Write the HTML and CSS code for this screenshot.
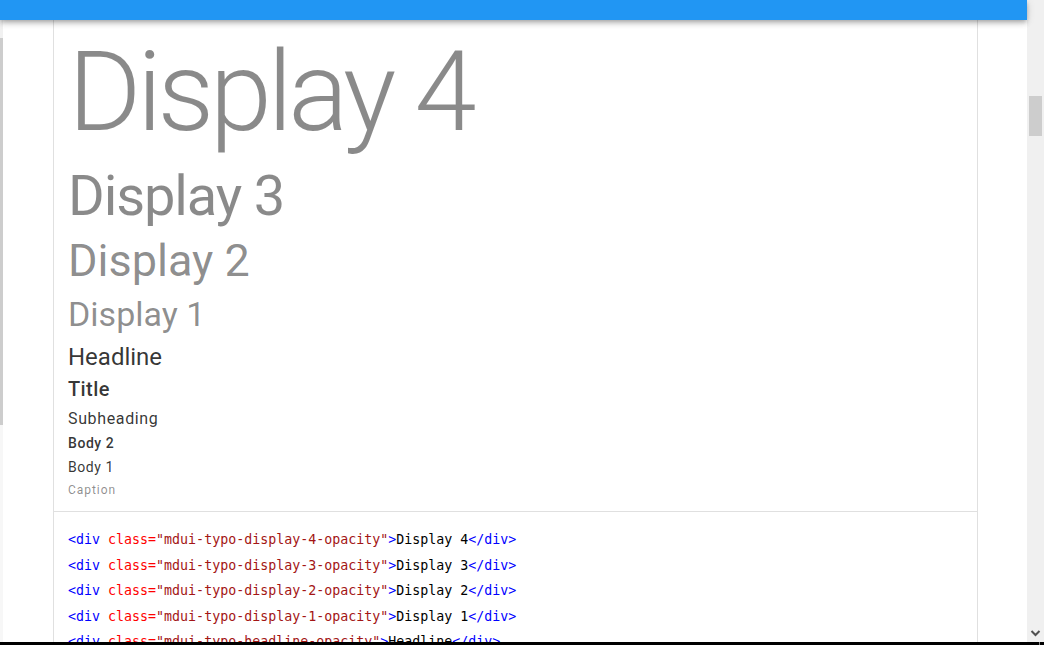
FILE: index.html
```html
<!DOCTYPE html>
<html>
<head>
<meta charset="utf-8">
<title>Typography</title>
<link rel="stylesheet" href="styles.css">
</head>
<body>
<div class="screen">
  <div class="window">
    <div class="leftbar"><div class="leftbar-top"></div><div class="leftbar-thumb"></div></div>
    <div class="page">
      <div class="card">
        <div class="demo">
          <div class="t-d4">Display 4</div>
          <div class="t-d3">Display 3</div>
          <div class="t-d2">Display 2</div>
          <div class="t-d1">Display 1</div>
          <div class="t-headline">Headline</div>
          <div class="t-title">Title</div>
          <div class="t-subheading">Subheading</div>
          <div class="t-body2">Body 2</div>
          <div class="t-body1">Body 1</div>
          <div class="t-caption">Caption</div>
        </div>
        <div class="code">
          <div class="line"><span class="tag">&lt;div</span> <span class="attr">class=</span><span class="val">"mdui-typo-display-4-opacity"</span><span class="tag">&gt;</span>Display 4<span class="tag">&lt;/div&gt;</span></div>
          <div class="line"><span class="tag">&lt;div</span> <span class="attr">class=</span><span class="val">"mdui-typo-display-3-opacity"</span><span class="tag">&gt;</span>Display 3<span class="tag">&lt;/div&gt;</span></div>
          <div class="line"><span class="tag">&lt;div</span> <span class="attr">class=</span><span class="val">"mdui-typo-display-2-opacity"</span><span class="tag">&gt;</span>Display 2<span class="tag">&lt;/div&gt;</span></div>
          <div class="line"><span class="tag">&lt;div</span> <span class="attr">class=</span><span class="val">"mdui-typo-display-1-opacity"</span><span class="tag">&gt;</span>Display 1<span class="tag">&lt;/div&gt;</span></div>
          <div class="line"><span class="tag">&lt;div</span> <span class="attr">class=</span><span class="val">"mdui-typo-headline-opacity"</span><span class="tag">&gt;</span>Headline<span class="tag">&lt;/div&gt;</span></div>
        </div>
      </div>
    </div>
    <div class="scrollbar">
      <div class="scroll-track"><div class="scroll-thumb"></div></div>
      <div class="scroll-arrow">
        <svg width="17" height="17" viewBox="0 0 17 17"><polyline points="4.5,6 8.5,10 12.5,6" fill="none" stroke="#505050" stroke-width="2"/></svg>
      </div>
    </div>
    <header class="appbar"></header>
  </div>
  <div class="taskbar"><div class="taskbar-mark"></div></div>
</div>
</body>
</html>
```
FILE: styles.css
```css
html, body {
  margin: 0;
  padding: 0;
  width: 1044px;
  height: 645px;
  overflow: hidden;
  background: #fff;
}

.screen {
  display: flex;
  flex-direction: column;
  width: 1044px;
  height: 645px;
}

.window {
  position: relative;
  display: flex;
  height: 642px;
  overflow: hidden;
}

.leftbar {
  width: 3px;
  flex: none;
  display: flex;
  flex-direction: column;
  background: #f7f7f7;
}

.leftbar-top {
  height: 38px;
  background: #f1f1f1;
}

.leftbar-thumb {
  height: 387px;
  background: #cdcdcd;
}

.page {
  flex: 1;
  overflow: hidden;
  background: #fff;
}

.card {
  margin-left: 50px;
  width: 923px;
  border: 1px solid #e0e0e0;
  border-top: none;
  background: #fff;
}

.demo {
  padding: 26px 14px 10px;
  font-family: Roboto, "Noto Sans", sans-serif;
  border-bottom: 1px solid #e0e0e0;
}

.t-d4 {
  font-size: 112px;
  font-weight: 300;
  letter-spacing: -0.04em;
  line-height: 132px;
  color: rgba(0, 0, 0, 0.46);
}

.t-d3 {
  font-size: 56px;
  letter-spacing: -0.02em;
  line-height: 76px;
  color: rgba(0, 0, 0, 0.46);
}

.t-d2 {
  font-size: 45px;
  line-height: 53px;
  color: rgba(0, 0, 0, 0.46);
}

.t-d1 {
  font-size: 34px;
  line-height: 55px;
  color: rgba(0, 0, 0, 0.46);
}

.t-headline {
  font-size: 24px;
  line-height: 31px;
  color: rgba(0, 0, 0, 0.8);
}

.t-title {
  font-size: 20px;
  font-weight: 500;
  letter-spacing: 0.02em;
  line-height: 33px;
  color: rgba(0, 0, 0, 0.8);
}

.t-subheading {
  font-size: 16px;
  letter-spacing: 0.04em;
  line-height: 25px;
  color: rgba(0, 0, 0, 0.8);
}

.t-body2 {
  font-size: 14px;
  font-weight: 500;
  letter-spacing: 0.04em;
  line-height: 24px;
  color: rgba(0, 0, 0, 0.8);
}

.t-body1 {
  font-size: 14px;
  letter-spacing: 0.04em;
  line-height: 25px;
  color: rgba(0, 0, 0, 0.8);
}

.t-caption {
  font-size: 12px;
  letter-spacing: 0.08em;
  line-height: 21px;
  color: rgba(0, 0, 0, 0.46);
}

.code {
  padding: 15px 13px 0 14px;
  font-family: "DejaVu Sans Mono", "Liberation Mono", monospace;
  font-size: 13.3px;
  line-height: 25.5px;
  color: #000;
}

.line {
  white-space: pre;
}

.tag { color: #0000ff; }
.attr { color: #ff0000; }
.val { color: #a31515; }

.scrollbar {
  width: 17px;
  flex: none;
  display: flex;
  flex-direction: column;
  background: #f0f0f0;
}

.scroll-track {
  flex: 1;
  padding: 96px 2px 0 2px;
}

.scroll-thumb {
  height: 40px;
  background: #cdcdcd;
}

.scroll-arrow {
  height: 17px;
}

.scroll-arrow svg {
  display: block;
}

.appbar {
  position: absolute;
  left: 0;
  top: 0;
  right: 17px;
  height: 20px;
  background: #2196f3;
  box-shadow: 0 2px 4px -1px rgba(0, 0, 0, 0.2), 0 4px 5px 0 rgba(0, 0, 0, 0.14), 0 1px 10px 0 rgba(0, 0, 0, 0.12);
}

.taskbar {
  height: 3px;
  background: #000;
  position: relative;
}

.taskbar-mark {
  position: absolute;
  left: 1039px;
  top: 0;
  width: 1px;
  height: 3px;
  background: #888;
}
```
